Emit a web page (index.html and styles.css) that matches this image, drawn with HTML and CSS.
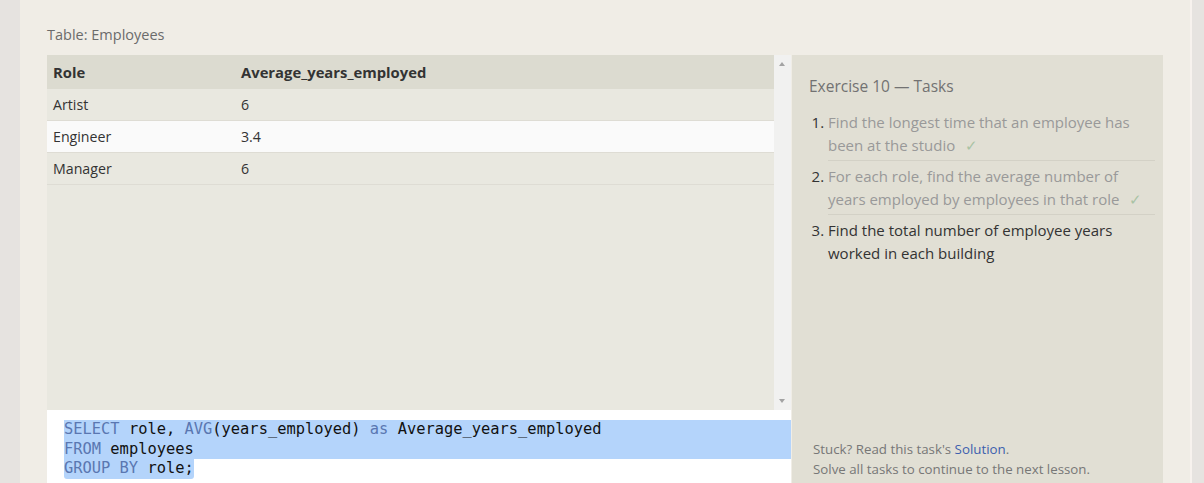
FILE: index.html
```html
<!DOCTYPE html>
<html>
<head>
<meta charset="utf-8">
<link rel="stylesheet" href="styles.css">
</head>
<body>
<div class="page">
  <div class="card">
    <div class="table-title">Table: Employees</div>
    <div class="workspace">
      <div class="left">
        <div class="results">
          <div class="table-wrap">
            <table class="data">
              <thead>
                <tr><th class="c1">Role</th><th>Average_years_employed</th></tr>
              </thead>
              <tbody>
                <tr><td>Artist</td><td>6</td></tr>
                <tr class="alt"><td>Engineer</td><td>3.4</td></tr>
                <tr><td>Manager</td><td>6</td></tr>
              </tbody>
            </table>
          </div>
          <div class="scrollbar">
            <span class="arrow up"></span>
            <span class="arrow down"></span>
          </div>
        </div>
        <div class="editor">
          <div class="line sel-full"><span class="kw">SELECT</span> role, <span class="kw">AVG</span>(years_employed) <span class="kw">as</span> Average_years_employed</div>
          <div class="line sel-full"><span class="kw">FROM</span> employees</div>
          <div class="line"><span class="sel-part"><span class="kw">GROUP BY</span> role;</span></div>
        </div>
      </div>
      <div class="tasks">
        <div class="tasks-title">Exercise 10 — Tasks</div>
        <ol class="task-list">
          <li class="done"><span class="t">Find the longest time that an employee has been at the studio <span class="check">✓</span></span></li>
          <li class="done"><span class="t">For each role, find the average number of years employed by employees in that role <span class="check">✓</span></span></li>
          <li class="current"><span class="t">Find the total number of employee years worked in each building</span></li>
        </ol>
        <div class="help">
          <div>Stuck? Read this task's <a class="link">Solution</a>.</div>
          <div>Solve all tasks to continue to the next lesson.</div>
        </div>
      </div>
    </div>
  </div>
</div>
</body>
</html>
```

FILE: styles.css
```css
html, body {
  margin: 0;
  padding: 0;
  background: #e6e3e0;
  height: 483px;
  overflow: hidden;
  font-family: "Open Sans", "Noto Sans", sans-serif;
}

.page {
  display: flex;
  padding-left: 20px;
}

.card {
  width: 1172px;
  flex: none;
  background: #f0ede6;
  border-right: 2px solid #f7f2ee;
  padding: 0 27px;
  box-sizing: border-box;
  height: 483px;
}

.table-title {
  padding-top: 26px;
  margin-bottom: 11px;
  font-size: 14.5px;
  line-height: 18px;
  color: #6b6b6b;
}

.workspace {
  display: flex;
  height: 428px;
}

.left {
  width: 744px;
  flex: none;
  display: flex;
  flex-direction: column;
}

.results {
  height: 355px;
  flex: none;
  display: flex;
  background: #e9e8e0;
}

.table-wrap {
  flex: 1;
}

.data {
  width: 100%;
  border-collapse: collapse;
  font-size: 14.2px;
  color: #333;
}

.data th {
  background: #dcdbd0;
  text-align: left;
  font-weight: 700;
  height: 34px;
  padding: 0 6px;
  font-size: 14.8px;
  color: #333;
}

.data th.c1 {
  width: 176px;
}

.data td {
  height: 31px;
  padding: 0 6px;
  border-bottom: 1px solid #dedcd4;
}

.data tr.alt td {
  background: #fafafa;
}

.scrollbar {
  width: 17px;
  background: #f1f1f0;
  position: relative;
}

.arrow {
  position: absolute;
  left: 5px;
  width: 0;
  height: 0;
  border-left: 3.5px solid transparent;
  border-right: 3.5px solid transparent;
}

.arrow.up {
  top: 7px;
  border-bottom: 4px solid #a3a3a3;
}

.arrow.down {
  bottom: 7px;
  border-top: 4px solid #a3a3a3;
}

.editor {
  flex: 1;
  background: #ffffff;
  padding: 10px 0 0 17px;
  font-family: "DejaVu Sans Mono", monospace;
  font-size: 15.4px;
  line-height: 19.5px;
  color: #111;
}

.line {
  white-space: pre;
}

.sel-full {
  background: #b4d4fb;
}

.sel-part {
  background: #b4d4fb;
  border-radius: 0 0 3px 3px;
  display: inline-block;
}

.kw {
  color: #5a77b1;
}

.tasks {
  width: 371px;
  flex: none;
  margin-left: 1px;
  background: #e1dfd4;
  padding: 20px 8px 4px 17px;
  box-sizing: border-box;
  display: flex;
  flex-direction: column;
}

.tasks-title {
  font-size: 15.5px;
  line-height: 22px;
  color: #727272;
}

.task-list {
  margin: 10px 0 0 0;
  padding-left: 19px;
  font-size: 15px;
  line-height: 22.5px;
}

.task-list li {
  padding: 4px 0 4px 0;
  border-bottom: 1px solid #d3d1c6;
}

.task-list li:last-child {
  border-bottom: none;
}

.task-list li::marker {
  color: #333;
}

.task-list li.done .t {
  color: #999;
}

.task-list li.current .t {
  color: #333;
}

.check {
  color: #a9c3a4;
  margin-left: 6px;
}

.help {
  margin-top: auto;
  font-size: 13.3px;
  line-height: 20px;
  color: #777;
  padding-left: 4px;
}

.link {
  color: #3d5fae;
  text-decoration: none;
}
```
